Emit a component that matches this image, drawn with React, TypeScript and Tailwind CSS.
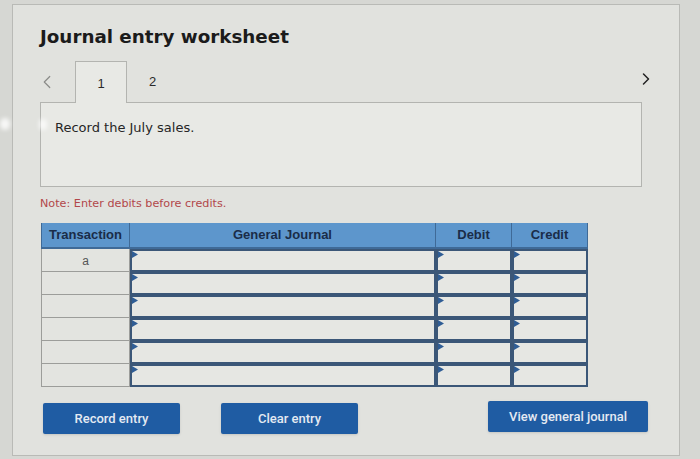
import { ChevronLeft, ChevronRight } from "lucide-react";

const rows = ["a", "", "", "", "", ""];

// little flag marking each editable cell
const CellFlag = () => (
  <svg
    className="absolute left-0 top-0"
    width="6"
    height="7"
    viewBox="0 0 6 7"
  >
    <path d="M0 0 L6 3.5 L0 7 Z" fill="#2f5d95" />
  </svg>
);

const InputCell = () => (
  <div className="relative h-full border-2 border-[#3b5778] bg-[#e6e7e3]">
    <CellFlag />
  </div>
);

const ActionButton = ({ label, className }: { label: string; className?: string }) => (
  <button
    className={
      "h-[31px] rounded-[2px] bg-[#1f5ca3] text-[13px] font-medium text-[#e4eaf2] shadow-sm " +
      (className ?? "")
    }
    style={{ fontFamily: "Roboto, 'Liberation Sans', sans-serif" }}
  >
    {label}
  </button>
);

export default function App() {
  return (
    <div className="h-[459px] w-[700px] overflow-hidden bg-[#d6d7d3] pl-[12px] pt-[4px]">
      <div
        className="relative h-[452px] w-[668px] border border-[#b9bab6] bg-[#e1e2de] pl-[27px] pt-[20px]"
        style={{ fontFamily: "'DejaVu Sans', Verdana, sans-serif" }}
      >
        <h1 className="text-[18.3px] font-bold leading-[24px] text-[#1b1b1b]">
          Journal entry worksheet
        </h1>

        {/* tab strip */}
        <div className="mt-[12px] flex h-[41px] w-[616px] items-center">
          <ChevronLeft className="ml-[-4px] h-[22px] w-[22px] text-[#8a8b88]" strokeWidth={1.3} />
          <div className="relative z-10 ml-[17px] flex h-[42px] w-[52px] items-center justify-center self-start border border-b-0 border-[#b3b4b0] bg-[#e8e9e5] pt-[2px] text-[13px] text-[#2a2a2a]"
            style={{ fontFamily: "'Liberation Sans', Arial, sans-serif" }}>
            1
          </div>
          <div className="ml-[22px] text-[13px] text-[#2a2a2a]" style={{ fontFamily: "'Liberation Sans', Arial, sans-serif" }}>
            2
          </div>
          <ChevronRight className="ml-auto mt-[-6px] h-[20px] w-[20px] text-[#222]" strokeWidth={1.8} />
        </div>

        {/* prompt box */}
        <div className="h-[85px] w-[602px] border border-[#b3b4b0] bg-[#e8e9e5] pl-[14px] pt-[15px] text-[13px] text-[#262626]">
          Record the July sales.
        </div>

        <p className="mt-[9px] text-[11.2px] text-[#b2474a]">Note: Enter debits before credits.</p>

        {/* journal grid */}
        <div
          className="ml-[1px] mt-[10px] grid w-[547px] grid-cols-[89px_306px_76px_76px]"
          style={{ fontFamily: "'Liberation Sans', Arial, sans-serif" }}
        >
          {["Transaction", "General Journal", "Debit", "Credit"].map((h) => (
            <div
              key={h}
              className="flex h-[26px] items-center justify-center border-r border-b-2 border-[#3f6a97] bg-[#5d96cc] text-[13px] font-bold text-[#1a2c48] first:border-l"
            >
              {h}
            </div>
          ))}
          {rows.map((t, i) => (
            <div key={i} className="contents">
              <div className="flex h-[23px] items-start justify-center border border-t-0 border-[#9c9d9a] bg-[#e3e4e0] pt-[3px] text-[12px] text-[#555]">
                {t}
              </div>
              <InputCell />
              <InputCell />
              <InputCell />
            </div>
          ))}
        </div>

        {/* actions */}
        <div className="mt-[16px] flex w-[608px] items-center">
          <ActionButton label="Record entry" className="ml-[3px] w-[137px]" />
          <ActionButton label="Clear entry" className="ml-[41px] w-[137px]" />
          <ActionButton label="View general journal" className="ml-auto mt-[-3px] w-[160px]" />
        </div>

        {/* glare spots on the screen */}
        <div className="absolute left-[-13px] top-[113px] h-[12px] w-[10px] rounded-full bg-white/80 blur-[2px]" />
        <div className="absolute left-[26px] top-[114px] h-[11px] w-[8px] rounded-full bg-white/70 blur-[2px]" />
      </div>
    </div>
  );
}
